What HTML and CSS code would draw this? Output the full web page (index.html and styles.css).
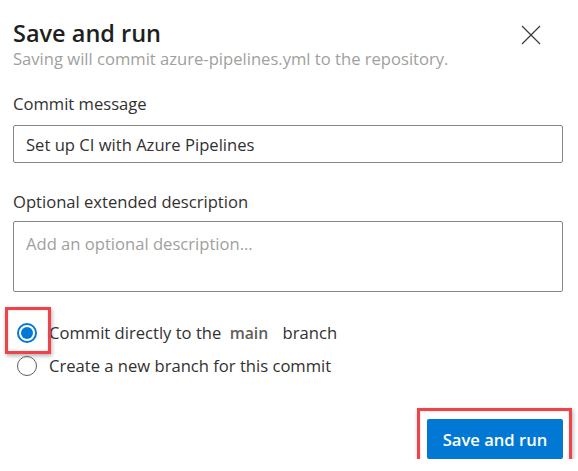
FILE: index.html
```html
<!DOCTYPE html>
<html lang="en">
<head>
<meta charset="utf-8">
<title>Save and run</title>
<link rel="stylesheet" href="styles.css">
</head>
<body>
<div class="dialog">
  <div class="header">
    <div class="titles">
      <h1 class="title">Save and run</h1>
      <div class="subtitle">Saving will commit azure-pipelines.yml to the repository.</div>
    </div>
    <button class="close" aria-label="Close">
      <svg width="20" height="20" viewBox="0 0 20 20"><path d="M1 1 L19 19 M19 1 L1 19" stroke="#3b3a39" stroke-width="1.2" fill="none"/></svg>
    </button>
  </div>

  <label class="label label-first">Commit message</label>
  <div class="input">Set up CI with Azure Pipelines</div>

  <label class="label label-second">Optional extended description</label>
  <div class="textarea">Add an optional description...</div>

  <div class="choices">
    <div class="choice">
      <span class="radio checked"><span class="dot"></span></span>
      <span class="choice-text">Commit directly to the <span class="branch">main</span> branch</span>
      <span class="highlight hl-radio"></span>
    </div>
    <div class="choice">
      <span class="radio"></span>
      <span class="choice-text">Create a new branch for this commit</span>
    </div>
  </div>

  <div class="footer">
    <div class="btn-wrap">
      <button class="primary">Save and run</button>
      <span class="highlight hl-button"></span>
    </div>
  </div>
</div>
</body>
</html>
```
FILE: styles.css
```css
html, body {
  margin: 0;
  padding: 0;
  background: #ffffff;
}
body {
  font-family: "Open Sans", "Noto Sans", sans-serif;
  color: #323130;
}
.dialog {
  padding: 18px 15px 0 13px;
  display: flex;
  flex-direction: column;
}
.header {
  display: flex;
  justify-content: space-between;
  align-items: flex-start;
}
.title {
  margin: 0;
  font-size: 23.5px;
  line-height: 30px;
  font-weight: 600;
  color: #201f1e;
}
.subtitle {
  font-size: 16.6px;
  line-height: 22px;
  color: #a19f9d;
}
.close {
  border: none;
  background: none;
  padding: 0;
  margin: 7px 22px 0 0;
  width: 20px;
  height: 20px;
  display: flex;
}
.label {
  font-size: 16.6px;
  line-height: 22px;
  color: #323130;
}
.label-first { margin-top: 23px; }
.label-second { margin-top: 28px; }
.input {
  margin-top: 10px;
  height: 38px;
  box-sizing: border-box;
  border: 1px solid #8a8886;
  border-radius: 2px;
  padding: 1px 12px 0;
  font-size: 16.6px;
  line-height: 35px;
  color: #323130;
}
.textarea {
  margin-top: 8px;
  height: 71px;
  box-sizing: border-box;
  border: 1px solid #8a8886;
  border-radius: 2px;
  padding: 11px 12px;
  font-size: 16.6px;
  line-height: 22px;
  color: #a19f9d;
}
.choices {
  margin-top: 24px;
  display: flex;
  flex-direction: column;
}
.choice {
  position: relative;
  height: 33px;
  display: flex;
  align-items: center;
  gap: 12px;
  padding-left: 4px;
  font-size: 16.6px;
  color: #323130;
}
.radio {
  width: 20px;
  height: 20px;
  box-sizing: border-box;
  border: 1px solid #605e5c;
  border-radius: 50%;
  display: flex;
  align-items: center;
  justify-content: center;
  flex: none;
}
.radio.checked {
  border: 2px solid #0078d4;
}
.dot {
  width: 12px;
  height: 12px;
  border-radius: 50%;
  background: #0078d4;
}
.branch {
  font-weight: 600;
  font-size: 15.8px;
  color: #605e5c;
  margin: 0 10px 0 4px;
}
.highlight {
  position: absolute;
  box-sizing: border-box;
  border: 3px solid #ee4449;
  box-shadow: 1px 2px 4px rgba(0,0,0,0.3), inset 0 0 3px rgba(0,0,0,0.15);
  pointer-events: none;
}
.hl-radio {
  left: -8px;
  top: -9px;
  width: 46px;
  height: 47px;
}
.footer {
  margin-top: 37px;
  display: flex;
  justify-content: flex-end;
}
.btn-wrap {
  position: relative;
  display: flex;
}
.primary {
  width: 136px;
  height: 40px;
  border: none;
  border-radius: 2px;
  background: #0078d4;
  color: #ffffff;
  font-family: "Open Sans", "Noto Sans", sans-serif;
  font-size: 16.6px;
  font-weight: 600;
  padding: 0;
}
.hl-button {
  left: -10px;
  top: -11px;
  width: 155px;
  height: 62px;
}
```
